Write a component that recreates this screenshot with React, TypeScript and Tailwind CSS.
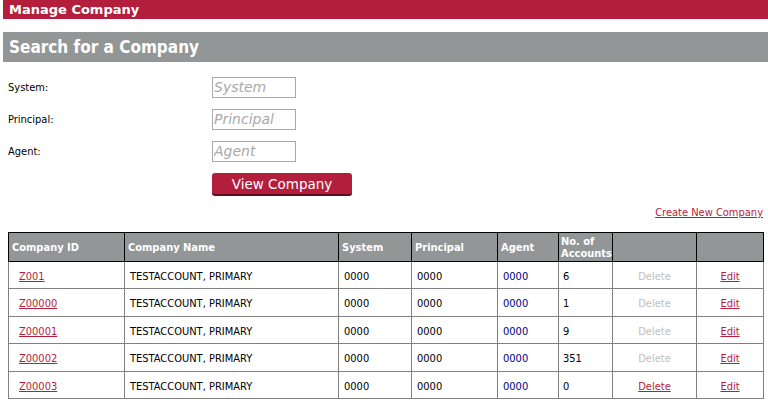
import React from "react";

const rows = [
  { id: "Z001", accounts: "6", canDelete: false },
  { id: "Z00000", accounts: "1", canDelete: false },
  { id: "Z00001", accounts: "9", canDelete: false },
  { id: "Z00002", accounts: "351", canDelete: false },
  { id: "Z00003", accounts: "0", canDelete: true },
];

const fields = ["System", "Principal", "Agent"];

export default function App() {
  return (
    <div className="w-[768px] h-[402px] bg-white overflow-hidden font-['DejaVu_Sans_Condensed','DejaVu_Sans',Verdana,sans-serif] text-[11px] text-black">
      {/* Page title */}
      <div className="ml-[3px] h-[19px] bg-[#b31e3c] pl-[6px] font-['DejaVu_Sans',sans-serif] text-[13px] font-bold leading-[19px] text-white">
        Manage Company
      </div>

      {/* Search section header */}
      <div className="ml-[3px] mt-[13px] h-[30px] bg-[#939697] pl-[6px] text-[17px] font-bold leading-[30px] text-white">
        Search for a Company
      </div>

      {/* Search form */}
      <div className="mt-[15px] flex flex-col gap-[11px] pl-[8px]">
        {fields.map((f) => (
          <div key={f} className="flex items-center">
            <label className="w-[204px] pt-[2px]">{f}:</label>
            <input
              placeholder={f}
              className="h-[21px] w-[84px] border border-[#a9a9a9] px-[1px] font-['DejaVu_Sans',sans-serif] text-[14px] italic outline-none placeholder:text-[#a9a9a9]"
            />
          </div>
        ))}
      </div>
      <div className="mt-[11px] pl-[212px]">
        <button className="h-[23px] w-[140px] rounded-[3px] border-b-2 border-[#5e0e1f] bg-[#b31e3c] font-['DejaVu_Sans',sans-serif] text-[13.5px] leading-[20px] text-white">
          View Company
        </button>
      </div>

      <div className="mt-[9px] pr-[5px] text-right">
        <a href="#" className="text-[#b31e3c] underline">
          Create New Company
        </a>
      </div>

      {/* Results table */}
      <table className="mt-[10px] ml-[8px] w-[755px] table-fixed border-collapse">
        <colgroup>
          <col className="w-[116px]" />
          <col className="w-[214px]" />
          <col className="w-[73px]" />
          <col className="w-[86px]" />
          <col className="w-[61px]" />
          <col className="w-[54px]" />
          <col className="w-[84px]" />
          <col className="w-[67px]" />
        </colgroup>
        <thead>
          <tr className="h-[29px] bg-[#939697] text-left font-bold leading-[12px] text-white">
            <th className="border border-black pl-[3px] pt-[3px]">Company ID</th>
            <th className="border border-black pl-[3px] pt-[3px]">Company Name</th>
            <th className="border border-black pl-[3px] pt-[3px]">System</th>
            <th className="border border-black pl-[3px] pt-[3px]">Principal</th>
            <th className="border border-black pl-[3px] pt-[3px]">Agent</th>
            <th className="border border-black pl-[2px] pt-[3px]">
              No. of
              <br />
              Accounts
            </th>
            <th className="border border-black"></th>
            <th className="border border-black"></th>
          </tr>
        </thead>
        <tbody>
          {rows.map((r) => (
            <tr key={r.id} className="h-[27.5px]">
              <td className="border border-[#808080] pl-[10px] pt-[4px]">
                <a href="#" className="text-[#b31e3c] underline">
                  {r.id}
                </a>
              </td>
              <td className="border border-[#808080] pl-[5px] pt-[4px]">TESTACCOUNT, PRIMARY</td>
              <td className="border border-[#808080] pl-[5px] pt-[4px]">0000</td>
              <td className="border border-[#808080] pl-[5px] pt-[4px]">0000</td>
              <td className="border border-[#808080] pl-[5px] pt-[4px] text-[#000080]">0000</td>
              <td className="border border-[#808080] pl-[4px] pt-[4px]">{r.accounts}</td>
              <td className="border border-[#808080] pt-[4px] text-center">
                {r.canDelete ? (
                  <a href="#" className="text-[#b31e3c] underline">
                    Delete
                  </a>
                ) : (
                  <span className="text-[#c0c0c0]">Delete</span>
                )}
              </td>
              <td className="border border-[#808080] pt-[4px] text-center">
                <a href="#" className="text-[#b31e3c] underline">
                  Edit
                </a>
              </td>
            </tr>
          ))}
        </tbody>
      </table>
    </div>
  );
}
